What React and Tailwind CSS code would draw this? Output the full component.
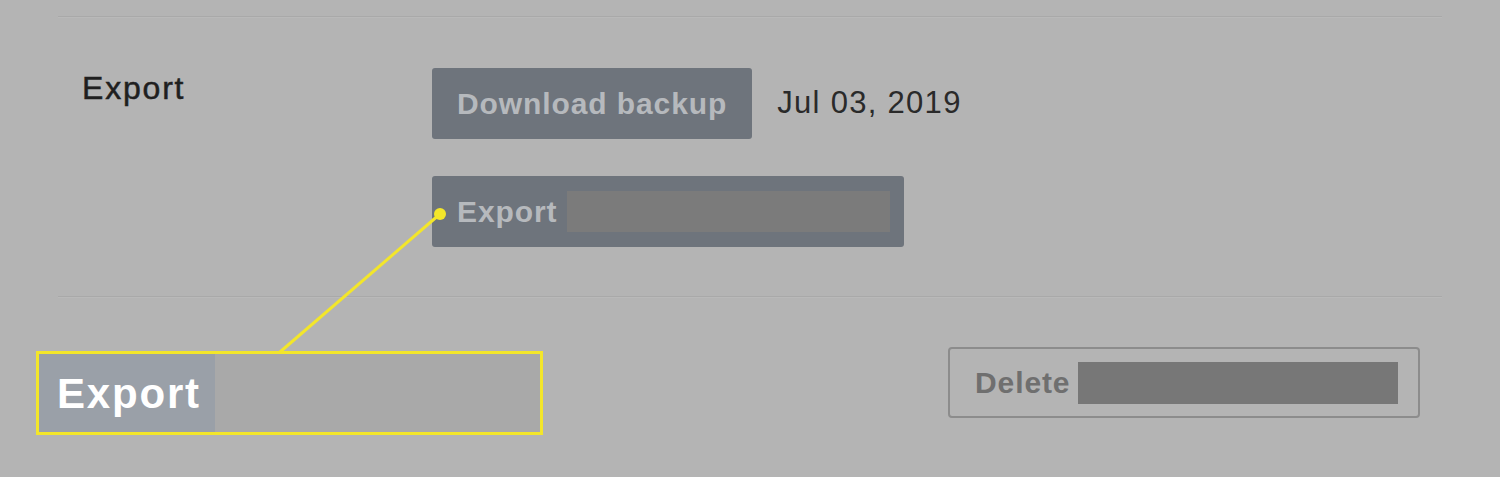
import React from 'react';

const Divider = () => <div className="mx-[58px] h-[2px] bg-[#a9a9a9] border-b border-[#b9b9b9]" />;

const Redacted = ({ className }) => <span className={`block ${className}`} />;

export default function App() {
  return (
    <div className="relative w-[1500px] h-[477px] overflow-hidden bg-[#b4b4b4] font-['Liberation_Sans',Arial,sans-serif]">
      <div className="pt-[16px]">
        <Divider />

        <div className="flex pt-[50px] pb-[49px]">
          <div className="w-[432px] pl-[82px] pt-[2px] text-[32px] leading-[36px] tracking-[1.8px] text-[#1f1f1f] [-webkit-text-stroke:0.5px_#1f1f1f]">
            Export
          </div>
          <div className="flex flex-col gap-[37px]">
            <div className="flex items-center gap-[25px]">
              <button className="h-[71px] px-[25px] rounded-[3px] bg-[#6e747c] text-[30px] font-bold tracking-[0.9px] text-[#b6b9bd]">
                Download backup
              </button>
              <span className="text-[31px] text-[#2a2a2a] tracking-[1.3px]">Jul 03, 2019</span>
            </div>
            <button className="flex items-center h-[71px] w-[472px] pl-[25px] pr-[14px] rounded-[3px] bg-[#6e747c] text-[30px] font-bold tracking-[0.9px] text-[#b6b9bd]">
              <span>Export</span>
              <Redacted className="ml-[10px] flex-1 h-[41px] bg-[#7b7b7b]" />
            </button>
          </div>
        </div>

        <Divider />

        <div className="flex justify-end pt-[49px] pr-[80px]">
          <button className="flex items-center h-[71px] w-[472px] pl-[25px] pr-[20px] rounded-[4px] border-2 border-[#8c8c8c] text-[30px] font-bold tracking-[0.9px] text-[#6f6f6f]">
            <span>Delete</span>
            <Redacted className="ml-[8px] flex-1 h-[42px] bg-[#777777]" />
          </button>
        </div>
      </div>

      {/* callout annotation */}
      <svg className="absolute inset-0 pointer-events-none" width="1500" height="477">
        <line x1="440" y1="214" x2="280" y2="352" stroke="#f3e62a" strokeWidth="3" />
        <circle cx="440" cy="214" r="6" fill="#f3e62a" />
      </svg>
      <div className="absolute left-[36px] top-[351px] flex w-[507px] h-[84px] border-[3px] border-[#f3e62a]">
        <div className="flex items-center w-[176px] pl-[18px] bg-[#9aa0a8] text-[42px] font-bold tracking-[1.8px] text-white">
          Export
        </div>
        <div className="flex-1 bg-[#a9a9a9]" />
      </div>
    </div>
  );
}
